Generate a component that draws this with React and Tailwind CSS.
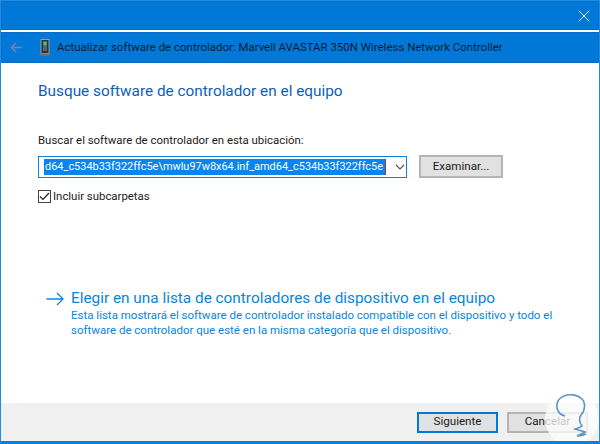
function Btn({ children, primary, className }) {
  return (
    <div className={"flex items-center justify-center text-[11.6px] text-[#1a1a1a] bg-[#e1e1e1] border-2 " + (primary ? "border-[#0078d7] " : "border-[#b4b4b4] ") + className}>
      {children}
    </div>
  );
}

export default function App() {
  return (
    <div className="relative w-[600px] h-[444px] flex flex-col overflow-hidden bg-white border border-[#1a8fe0] border-b-[3px] border-b-[#0c80d8] font-['Roboto',sans-serif]">
      <div className="h-[29px] bg-[#0078d7] border border-[#0a6cc4] shrink-0 flex items-center justify-end pr-[7px]">
        <svg width="12" height="12" viewBox="0 0 12 12" className="mr-[1px]"><path d="M1 1 L11 11 M11 1 L1 11" stroke="#e6f2fc" strokeWidth="1" fill="none" /></svg>
      </div>
      <div className="h-[31px] mt-[2px] bg-[#0078d7] border border-[#0a6cc4] shrink-0 flex items-center pl-[8px] text-[11.46px] text-[#0b1c33]">
        <svg width="13" height="11" viewBox="0 0 13 11" className="shrink-0"><path d="M12 5.5 H1.5 M6 1 L1.5 5.5 L6 10" stroke="#8a78b8" strokeWidth="1.3" fill="none" /></svg>
        <svg width="12" height="17" viewBox="0 0 12 17" className="ml-[16px] shrink-0">
          <rect x="2" y="0.5" width="8" height="14" fill="#2a3138" stroke="#8aa0b4" />
          <rect x="4" y="2" width="4" height="10" fill="#59636b" />
          <rect x="4.5" y="3" width="3" height="3" fill="#35d06a" />
          <rect x="0.5" y="14.5" width="11" height="2" fill="#7a6f66" />
        </svg>
        <span className="ml-[6px] whitespace-nowrap">Actualizar software de controlador: Marvell AVASTAR 350N Wireless Network Controller</span>
      </div>
      <div className="flex-1 flex flex-col pl-[37px] min-h-0">
        <div className="mt-[18px] text-[15.35px] leading-[20px] text-[#0f5fb5]">Busque software de controlador en el equipo</div>
        <div className="mt-[31px] text-[11.4px] leading-[16px] text-[#1a1a1a]">Buscar el software de controlador en esta ubicación:</div>
        <div className="mt-[7px] flex items-center">
          <div className="w-[369px] h-[22px] border border-[#0a84e0] flex items-center pl-[5px] bg-white">
            <div className="w-[342px] h-[16px] bg-[#0a84f0] border-r border-r-[#8a4a30] text-white text-[10.95px] leading-[16px] whitespace-nowrap pl-[1px]">d64_c534b33f322ffc5e\mwlu97w8x64.inf_amd64_c534b33f322ffc5e</div>
            <svg width="10" height="6" viewBox="0 0 10 6" className="ml-[9px] shrink-0"><path d="M1 1 L5 5 L9 1" stroke="#555" strokeWidth="1.1" fill="none" /></svg>
          </div>
          <Btn className="ml-[12px] w-[84px] h-[23px]">Examinar...</Btn>
        </div>
        <div className="mt-[10px] flex items-center text-[11.4px] leading-[16px] text-[#1a1a1a]">
          <div className="w-[13px] h-[13px] border border-[#444] flex items-center justify-center bg-white">
            <svg width="11" height="9" viewBox="0 0 11 9"><path d="M1 4.5 L4 7.5 L10 1" stroke="#222" strokeWidth="1.2" fill="none" /></svg>
          </div>
          <span className="ml-[2px]">Incluir subcarpetas</span>
        </div>
        <div className="mt-[84px] flex items-start">
          <svg width="18" height="14" viewBox="0 0 18 14" className="mt-[4px] ml-[8px] shrink-0"><path d="M0.5 7 H17 M11 1 L17 7 L11 13" stroke="#0c86de" strokeWidth="1.3" fill="none" /></svg>
          <div className="ml-[7px] text-[#0a84dc]">
            <div className="text-[15.35px] leading-[20px] whitespace-nowrap">Elegir en una lista de controladores de dispositivo en el equipo</div>
            <div className="text-[11.5px] leading-[15px] whitespace-nowrap">Esta lista mostrará el software de controlador instalado compatible con el dispositivo y todo el</div>
            <div className="text-[11.5px] leading-[15px] whitespace-nowrap">software de controlador que esté en la misma categoría que el dispositivo.</div>
          </div>
        </div>
      </div>
      <div className="h-[38px] shrink-0 bg-[#f0f0f0] flex items-center justify-end gap-[9px] pr-[11px]">
        <Btn primary className="w-[81px] h-[21px]">Siguiente</Btn>
        <Btn className="w-[81px] h-[21px]">Cancelar</Btn>
      </div>
      <svg width="56" height="52" viewBox="0 0 56 52" className="absolute -right-px -bottom-[3px]">
        <circle cx="28" cy="27" r="27" fill="#fff" opacity="0.75" />
        <path d="M21 24 C17 23 14 21 13 16 C12 10 15 6 20 4 C25 2 33 2 38 7 C42 11 41 19 37 23 C35 26 35 30 38 34 C36 36 33 36 31 37 C34 38 39 39 41 40 C38 42 35 43 33 44 C36 44 40 43 42 42" stroke="#5a96c8" strokeWidth="1.6" fill="none" />
      </svg>
    </div>
  );
}
